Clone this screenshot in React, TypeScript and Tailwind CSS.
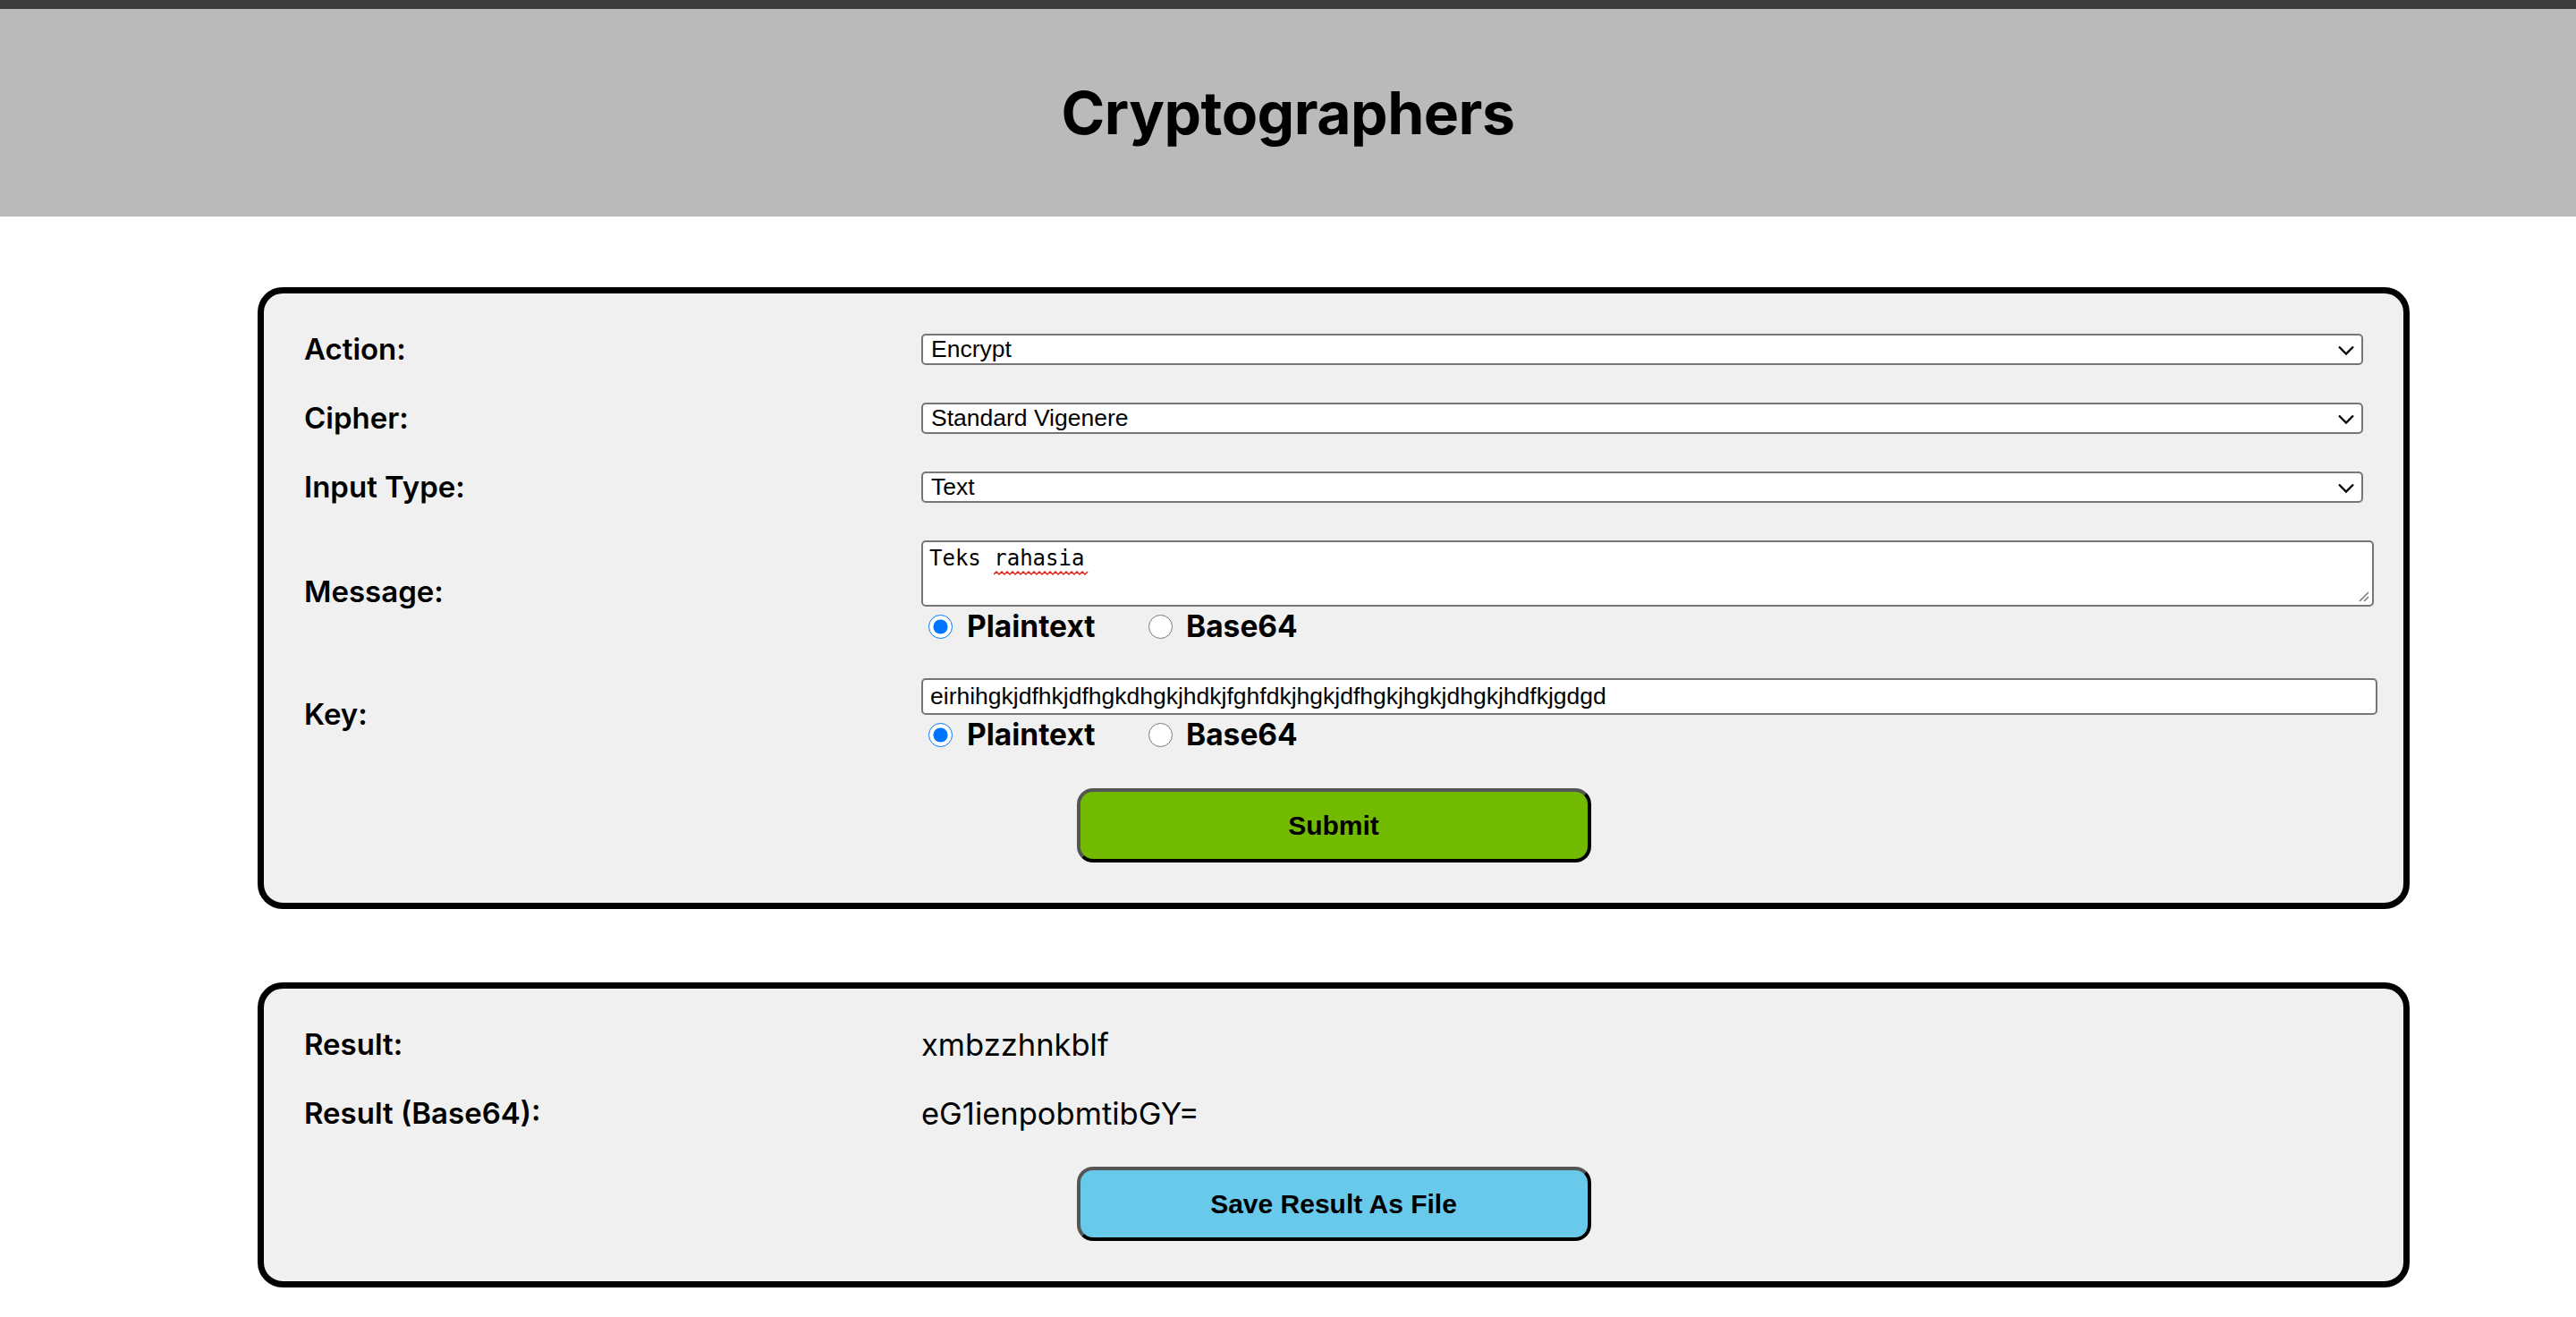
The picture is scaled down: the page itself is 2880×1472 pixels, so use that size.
import { ReactNode } from "react";

const Chevron = () => (
  <svg
    className="pointer-events-none absolute right-[9px] top-1/2 h-[15px] w-[20px] -translate-y-1/2"
    viewBox="0 0 20 15"
    fill="none"
  >
    <path d="M2 4l8 8 8-8" stroke="#000" strokeWidth="2.3" />
  </svg>
);

type RowProps = {
  label: string;
  children: ReactNode;
  className?: string;
};

const Row = ({ label, children, className = "mb-[42px]" }: RowProps) => (
  <div className={`flex items-center ${className}`}>
    <div className="w-[690px] shrink-0 text-[33px] font-semibold leading-[35px]">{label}</div>
    <div className="min-w-0 flex-1">{children}</div>
  </div>
);

const Select = ({ value }: { value: string }) => (
  <div className="relative">
    <select
      defaultValue={value}
      className="block h-[35px] w-full appearance-none rounded-[5px] border-2 border-[#767676] bg-white pl-[9px] font-['Liberation_Sans',Arial,sans-serif] text-[26.5px] leading-none text-black"
    >
      <option>{value}</option>
    </select>
    <Chevron />
  </div>
);

const Encoding = ({ name }: { name: string }) => (
  <div className="mt-[4px] flex h-[36px] items-center text-[33.5px] font-bold leading-[36px]">
    <label className="flex w-[256px] items-center">
      <input
        type="radio"
        name={name}
        defaultChecked
        className="m-0 ml-[8px] h-[27px] w-[27px] accent-[#0075ff]"
      />
      <span className="ml-[16px]">Plaintext</span>
    </label>
    <label className="flex items-center">
      <input type="radio" name={name} className="-ml-[2px] h-[27px] w-[27px]" />
      <span className="ml-[15px]">Base64</span>
    </label>
  </div>
);

const Card = ({ children, className = "" }: { children: ReactNode; className?: string }) => (
  <section
    className={`ml-[288px] w-[2406px] rounded-[28px] border-[7px] border-black bg-[#f0f0f0] p-[45px] ${className}`}
  >
    {children}
  </section>
);

const ActionButton = ({ children, color }: { children: ReactNode; color: string }) => (
  <button
    className={`mx-auto block h-[83px] w-[575px] rounded-[18px] border-[4px] border-b-black border-l-[#555] border-r-black border-t-[#555] font-['Liberation_Sans',Arial,sans-serif] text-[30px] font-bold text-black ${color}`}
  >
    {children}
  </button>
);

export default function App() {
  return (
    <div className="min-h-screen bg-white font-['Inter','Noto_Sans',sans-serif] text-black">
      <div className="h-[10px] bg-[#3d3d3d]" />
      <header className="flex h-[232px] items-center justify-center bg-[#bababa]">
        <h1 className="text-[66px] font-bold leading-none tracking-[-0.5px]">Cryptographers</h1>
      </header>

      <main className="pb-[33px] pt-[79px]">
        <Card>
          <Row label="Action:">
            <Select value="Encrypt" />
          </Row>
          <Row label="Cipher:">
            <Select value="Standard Vigenere" />
          </Row>
          <Row label="Input Type:">
            <Select value="Text" />
          </Row>
          <Row label="Message:" className="mb-[40px]">
            <div className="relative w-[calc(100%+12px)]">
              <textarea
                spellCheck={false}
                defaultValue="Teks rahasia"
                className="block h-[74px] w-full resize-none rounded-[5px] border-2 border-[#767676] bg-white px-[7px] py-[3px] font-['DejaVu_Sans_Mono',monospace] text-[24px] leading-[30px]"
              />
              <svg
                className="pointer-events-none absolute left-[81px] top-[34px] h-[6px] w-[106px]"
                viewBox="0 0 106 6"
                fill="none"
              >
                <path
                  d="M0 4 L3 1 L6 4 L9 1 L12 4 L15 1 L18 4 L21 1 L24 4 L27 1 L30 4 L33 1 L36 4 L39 1 L42 4 L45 1 L48 4 L51 1 L54 4 L57 1 L60 4 L63 1 L66 4 L69 1 L72 4 L75 1 L78 4 L81 1 L84 4 L87 1 L90 4 L93 1 L96 4 L99 1 L102 4 L105 1"
                  stroke="#e0251b"
                  strokeWidth="1.5"
                />
              </svg>
              <svg
                className="pointer-events-none absolute bottom-[5px] right-[5px] h-[14px] w-[14px]"
                viewBox="0 0 14 14"
                fill="none"
              >
                <path d="M13 3 L3 13 M13 8 L8 13" stroke="#777" strokeWidth="1.5" />
              </svg>
            </div>
            <Encoding name="message-enc" />
          </Row>
          <Row label="Key:">
            <input
              type="text"
              defaultValue="eirhihgkjdfhkjdfhgkdhgkjhdkjfghfdkjhgkjdfhgkjhgkjdhgkjhdfkjgdgd"
              className="block h-[41px] w-[calc(100%+16px)] rounded-[5px] border-2 border-[#767676] bg-white px-[8px] font-['Liberation_Sans',Arial,sans-serif] text-[26.5px] text-black"
            />
            <Encoding name="key-enc" />
          </Row>
          <ActionButton color="bg-[#71ba00]">Submit</ActionButton>
        </Card>

        <Card className="mt-[82px]">
          <Row label="Result:">
            <div className="text-[34.5px] leading-[35px]">xmbzzhnkblf</div>
          </Row>
          <Row label="Result (Base64):">
            <div className="text-[34.5px] leading-[35px]">eG1ienpobmtibGY=</div>
          </Row>
          <ActionButton color="bg-[#68c9eb]">Save Result As File</ActionButton>
        </Card>
      </main>
    </div>
  );
}
